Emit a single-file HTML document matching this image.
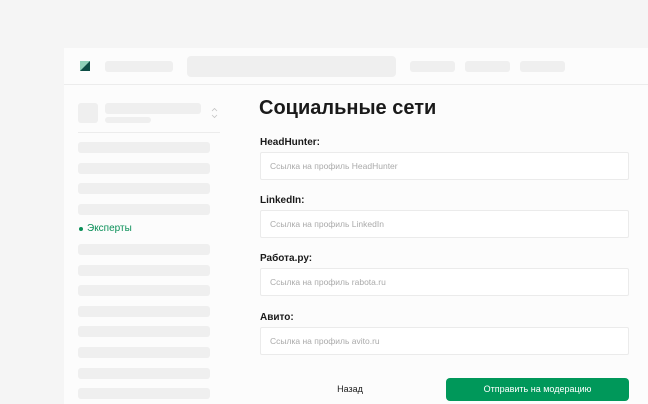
<!DOCTYPE html>
<html><head><meta charset="utf-8"><style>
*{margin:0;padding:0;box-sizing:border-box}
body{width:648px;height:404px;overflow:hidden;background:#f5f5f5;font-family:"Liberation Sans",sans-serif;position:relative}
.a{position:absolute}
.sk{position:absolute;background:#efefef;border-radius:3px}
.panel{position:absolute;left:64px;top:48px;width:584px;height:356px;background:#fcfcfc}
.lbl{position:absolute;left:260px;font-size:10px;font-weight:bold;color:#1a1a1a}
.inp{position:absolute;left:260px;width:369px;height:28px;background:#fff;border:1px solid #ebebeb;border-radius:2px;font-size:8.5px;color:#aaa;padding-left:9px;line-height:26px}
</style></head><body>
<div class="panel"></div>
<div class="a" style="left:64px;top:84px;width:584px;height:1px;background:#ececec"></div>
<svg class="a" style="left:80px;top:61px" width="10" height="10"><rect width="10" height="10" fill="#8fd0b8"/><polygon points="10,0 10,10 0,10" fill="#0d4d45"/></svg>
<div class="sk" style="left:105px;top:61px;width:68px;height:11px"></div>
<div class="sk" style="left:187px;top:56px;width:209px;height:21px;border-radius:4px"></div>
<div class="sk" style="left:410px;top:61px;width:45px;height:11px"></div>
<div class="sk" style="left:465px;top:61px;width:45px;height:11px"></div>
<div class="sk" style="left:520px;top:61px;width:45px;height:11px"></div>
<div class="sk" style="left:78px;top:103px;width:20px;height:20px"></div>
<div class="sk" style="left:105px;top:103px;width:96px;height:11px"></div>
<div class="sk" style="left:105px;top:117px;width:46px;height:6px"></div>
<svg class="a" style="left:211px;top:107px" width="7" height="12" fill="none" stroke="#c4c4c4" stroke-width="0.8"><path d="M1 4 L3.5 1.5 L6 4 M1 8 L3.5 10.5 L6 8"/></svg>
<div class="a" style="left:78px;top:132px;width:142px;height:1px;background:#ececec"></div>
<div class="sk" style="left:78px;top:142px;width:132px;height:11px"></div>
<div class="sk" style="left:78px;top:163px;width:132px;height:11px"></div>
<div class="sk" style="left:78px;top:183px;width:132px;height:11px"></div>
<div class="sk" style="left:78px;top:204px;width:132px;height:11px"></div>
<div class="a" style="left:79px;top:227px;width:4px;height:4px;border-radius:50%;background:#0a8f58"></div>
<div class="a" style="left:87px;top:223px;font-size:10px;color:#0a8f58">Эксперты</div>
<div class="sk" style="left:78px;top:244px;width:132px;height:11px"></div>
<div class="sk" style="left:78px;top:265px;width:132px;height:11px"></div>
<div class="sk" style="left:78px;top:285px;width:132px;height:11px"></div>
<div class="sk" style="left:78px;top:306px;width:132px;height:11px"></div>
<div class="sk" style="left:78px;top:326px;width:132px;height:11px"></div>
<div class="sk" style="left:78px;top:347px;width:132px;height:11px"></div>
<div class="sk" style="left:78px;top:368px;width:132px;height:11px"></div>
<div class="sk" style="left:78px;top:388px;width:132px;height:11px"></div>
<div class="a" style="left:259px;top:97px;font-size:20px;font-weight:bold;color:#1a1a1a">Социальные сети</div>
<div class="lbl" style="top:137px">HeadHunter:</div>
<div class="inp" style="top:152px">Ссылка на профиль HeadHunter</div>
<div class="lbl" style="top:195px">LinkedIn:</div>
<div class="inp" style="top:210px">Ссылка на профиль LinkedIn</div>
<div class="lbl" style="top:253px">Работа.ру:</div>
<div class="inp" style="top:268px">Ссылка на профиль rabota.ru</div>
<div class="lbl" style="top:312px">Авито:</div>
<div class="inp" style="top:327px">Ссылка на профиль avito.ru</div>
<div class="a" style="left:320px;top:384px;width:60px;text-align:center;font-size:9px;color:#1a1a1a">Назад</div>
<div class="a" style="left:446px;top:378px;width:183px;height:23px;background:#00985a;border-radius:4px;color:#fff;font-size:9px;text-align:center;line-height:23px">Отправить на модерацию</div>
</body></html>
